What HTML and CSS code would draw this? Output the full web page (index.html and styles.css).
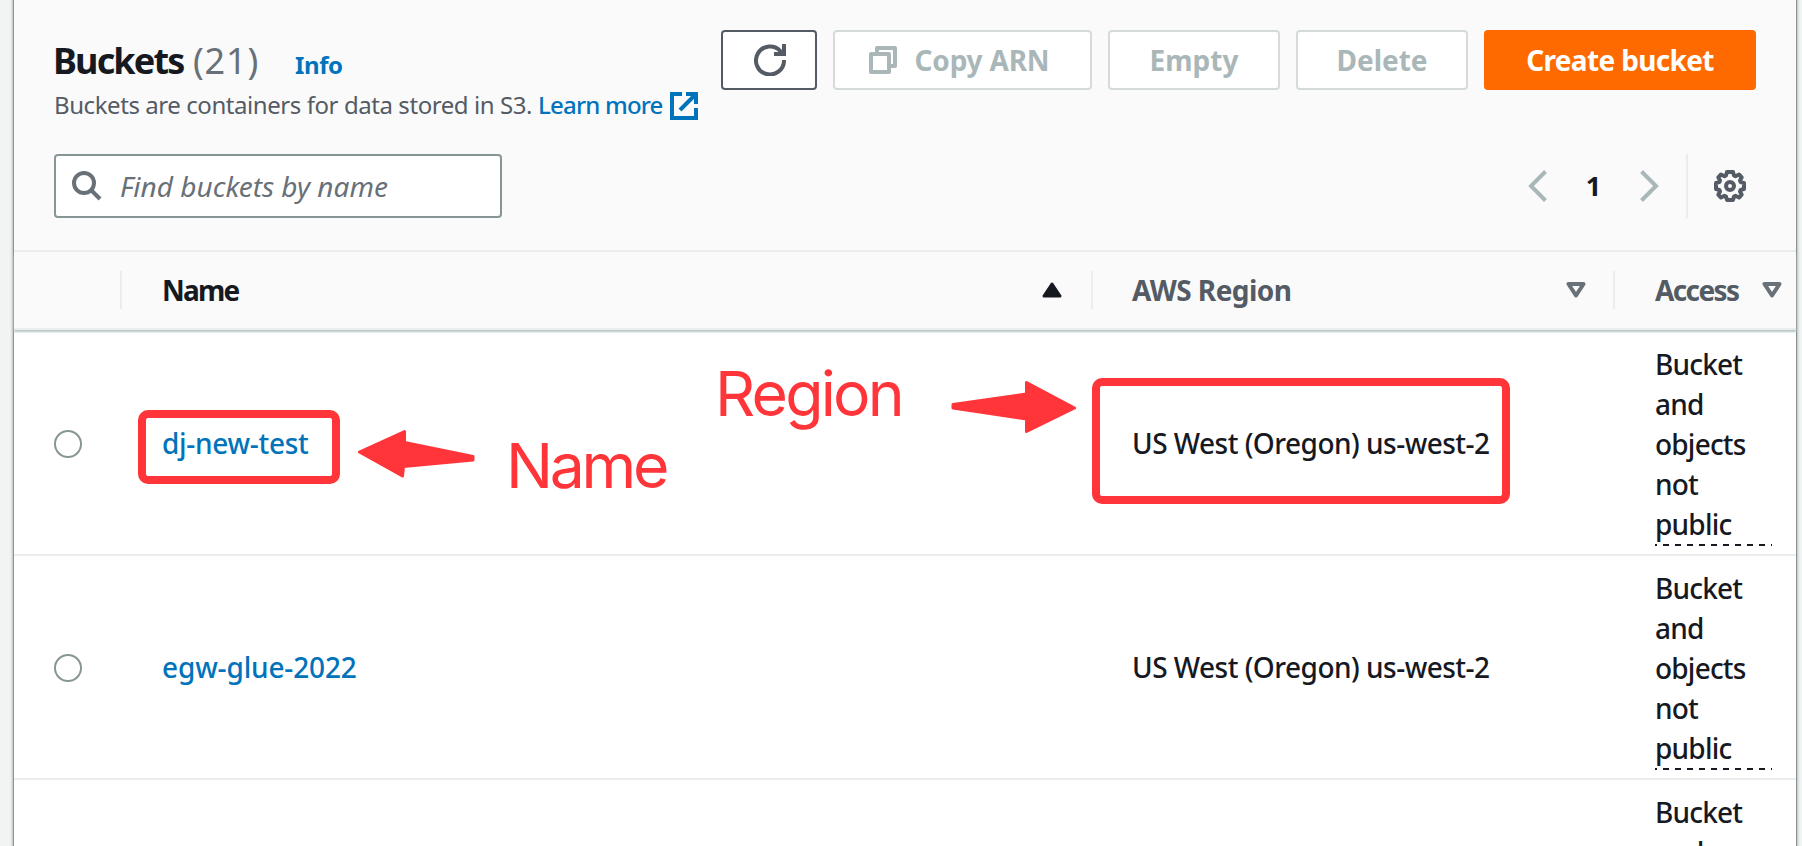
FILE: index.html
```
<!DOCTYPE html>
<html lang="en">
<head>
<meta charset="utf-8">
<title>Buckets</title>
<link rel="stylesheet" href="styles.css">
</head>
<body>
<main class="panel">
  <header class="header">
    <div class="title-row">
      <div class="titles">
        <h1 class="title"><span class="title-text">Buckets</span><span class="count">(21)</span><a class="info">Info</a></h1>
        <p class="desc"><span>Buckets are containers for data stored in S3.</span><a class="learn">Learn more</a>
          <svg class="ext" viewBox="0 0 28 28" fill="none" stroke="currentColor" stroke-width="4"><path d="M12 2H2v24h24V16M10 18 25 3"/><path d="M16 2h10v10" /><path d="M20 2h6v6z" stroke-width="1" fill="currentColor"/></svg>
        </p>
      </div>
      <div class="actions">
        <button class="btn btn-refresh"><svg width="32" height="32" viewBox="0 0 32 32" fill="none" stroke="currentColor" stroke-width="4"><path d="M30 16A14 14 0 1 1 26.5 7.2L29 10"/><path d="M30 0v10H20"/></svg></button>
        <button class="btn btn-copy disabled"><svg width="28" height="28" viewBox="0 0 28 28" fill="none" stroke="currentColor" stroke-width="4" stroke-linejoin="round"><path d="M2 8h18v18H2zM8 6V2h18v18h-4"/></svg><span>Copy ARN</span></button>
        <button class="btn btn-mid disabled">Empty</button>
        <button class="btn btn-mid disabled">Delete</button>
        <button class="btn btn-primary">Create bucket</button>
      </div>
    </div>
    <div class="tools">
      <div class="search">
        <svg width="30" height="30" viewBox="0 0 30 30" fill="none" stroke="currentColor" stroke-width="4"><circle cx="12" cy="12" r="10"/><path d="m19 19 9 9"/></svg>
        <span>Find buckets by name</span>
      </div>
      <div class="pager">
        <svg width="20" height="32" viewBox="0 0 20 32" fill="none" stroke="currentColor" stroke-width="4"><path d="M17.500 1.500 3 16l14.500 14.500"/></svg>
        <span class="page">1</span>
        <svg width="20" height="32" viewBox="0 0 20 32" fill="none" stroke="currentColor" stroke-width="4"><path d="M2.500 1.500 17 16 2.500 30.500"/></svg>
        <div class="settings">
          <svg width="32" height="32" viewBox="0 0 32 32" fill="none" stroke="currentColor" stroke-width="4" stroke-linejoin="round"><path d="M13 2h6l1 3.500 1.500.700L25 4.500 27.700 7.300 26 10.500l.600 1.600L30 13v6l-3.400.900-.600 1.600 1.700 3.200L25 27.500l-3.500-1.700-1.500.700L19 30h-6l-1-3.500-1.500-.700L7 27.500l-2.700-2.800L6 21.500l-.600-1.600L2 19v-6l3.400-.900.600-1.600-1.700-3.200L7 4.500l3.500 1.700 1.500-.700z"/><circle cx="16" cy="16" r="4"/></svg>
        </div>
      </div>
    </div>
  </header>

  <section class="table">
    <div class="row head">
      <div></div>
      <div class="th sorted"><span class="t-name">Name</span><svg width="20" height="16" viewBox="0 0 20 16"><path d="M10 2 18 14H2z" fill="currentColor" stroke="currentColor" stroke-width="3" stroke-linejoin="round"/></svg></div>
      <div class="th region"><span class="t-region">AWS Region</span><svg class="down" width="20" height="16" viewBox="0 0 20 16"><path d="M2.500 2h15L10 13.500z" fill="none" stroke="currentColor" stroke-width="4" stroke-linejoin="round"/></svg></div>
      <div class="th last"><span class="t-access">Access</span><svg class="down" width="20" height="16" viewBox="0 0 20 16"><path d="M2.500 2h15L10 13.500z" fill="none" stroke="currentColor" stroke-width="4" stroke-linejoin="round"/></svg></div>
    </div>
    <div class="row">
      <div class="pick"><span class="radio"></span></div>
      <div class="td"><a class="link tight">dj-new-test</a></div>
      <div class="td">US West (Oregon) us-west-2</div>
      <div class="td access"><span>Bucket<br>and<br>objects<br>not<br>public</span></div>
    </div>
    <div class="row">
      <div class="pick"><span class="radio"></span></div>
      <div class="td"><a class="link">egw-glue-2022</a></div>
      <div class="td">US West (Oregon) us-west-2</div>
      <div class="td access"><span>Bucket<br>and<br>objects<br>not<br>public</span></div>
    </div>
    <div class="row">
      <div></div>
      <div class="td"></div>
      <div class="td"></div>
      <div class="td access"><span>Bucket<br>and</span></div>
    </div>
  </section>
</main>

<div class="mark mark-name"></div>
<div class="mark mark-region"></div>
<svg class="arrows" width="1802" height="846" viewBox="0 0 1802 846"><path d="M359.500 452 404.500 431.500V442.500L473 456.500V460L403.500 466.500 402.500 476zM953 404.500V408L1026.500 419V431.500L1074.500 408 1026.500 382.500V394z"/></svg>
<div class="note note-name">Name</div>
<div class="note note-region">Region</div>
</body>
</html>
```
FILE: styles.css
```
* { box-sizing: border-box; }
body {
  margin: 0;
  width: 1802px;
  height: 846px;
  overflow: hidden;
  position: relative;
  background: #f2f3f3;
  font: 500 28px/40px "Noto Sans", "Open Sans", sans-serif;
  color: #16191f;
}
svg { display: block; flex: none; }

.panel {
  width: 1782px;
  height: 846px;
  margin-left: 14px;
  background: #fff;
  box-shadow: 0 0 0 1px #879596, 0 0 2px 2px #b4bfc0;
}

.header {
  height: 252px;
  padding: 30px 40px 0 41px;
  background: #fafafa;
  border-bottom: 2px solid #eaeded;
}
.title-row { display: flex; justify-content: space-between; height: 124px; }
.title {
  display: flex;
  align-items: baseline;
  margin: 0;
  height: 53px;
  padding-top: 6px;
  font-size: 36px;
  line-height: 50px;
  font-weight: 700;
}
.title-text { width: 140px; margin-left: -2px; letter-spacing: -1.85px; }
.count { width: 102px; font-weight: 400; letter-spacing: .8px; color: #687078; }
.info { font-size: 24px; letter-spacing: -.4px; color: #0073bb; }
.desc {
  display: flex;
  align-items: center;
  margin: 0;
  height: 44px;
  font-size: 24px;
  font-weight: 400;
  color: #545b64;
  white-space: nowrap;
}
.desc span { width: 484px; margin-left: -1px; letter-spacing: -.43px; }
.learn { width: 132px; font-weight: 500; letter-spacing: -.8px; color: #0073bb; }
.ext { width: 28px; height: 28px; margin-top: 2px; color: #0073bb; }

.actions { display: flex; gap: 16px; height: 60px; }
.btn {
  display: flex;
  align-items: center;
  justify-content: center;
  height: 60px;
  padding: 0 0 1px;
  border: 2px solid #545b64;
  border-radius: 4px;
  background: #fff;
  color: #545b64;
  font: 700 28px/40px "Noto Sans", sans-serif;
  white-space: nowrap;
}
.disabled { border-color: #d5dbdb; color: #aab7b8; }
.btn-refresh { width: 96px; padding: 0 0 0 2px; }
.btn-copy { width: 259px; gap: 18px; padding-right: 7px; letter-spacing: -.2px; }
.btn-copy svg { margin-top: 1px; }
.btn-mid { width: 172px; }
.btn-primary { width: 272px; border-color: #ff6a00; background: #ff6a00; color: #fff; letter-spacing: -.65px; }

.tools { display: flex; justify-content: space-between; }
.search {
  display: flex;
  align-items: center;
  gap: 18px;
  width: 448px;
  height: 64px;
  padding-left: 16px;
  margin-left: -1px;
  border: 2px solid #879596;
  border-radius: 4px;
  background: #fff;
  color: #687078;
  font-style: italic;
  font-weight: 400;
}
.pager { display: flex; align-items: center; color: #aab7b8; }
.page { width: 91px; padding: 0 0 1px; text-align: center; font-size: 27px; font-weight: 700; color: #16191f; }
.settings {
  display: flex;
  align-items: center;
  width: 70px;
  height: 64px;
  margin-left: 27px;
  padding-left: 26px;
  border-left: 2px solid #eaeded;
  color: #545b64;
}

.row {
  display: grid;
  grid-template-columns: 108px 970px 523px 181px;
  height: 224px;
  align-items: center;
  border-bottom: 2px solid #eaeded;
}
.head {
  position: relative;
  height: 78px;
  background: #fafafa;
  box-shadow: 0 2px 2px #b9c4c4;
}
.head + .row { height: 226px; padding-top: 2px; }
.th {
  display: flex;
  align-items: center;
  justify-content: space-between;
  height: 38px;
  margin-left: -2px;
  padding: 0 29px 1px 40px;
  border-left: 2px solid #eaeded;
  font-weight: 700;
  color: #545b64;
}
.th svg { margin-top: 1px; }
.sorted { color: #16191f; }
.sorted svg { margin-right: 1px; }
.region { margin-left: -1px; padding-left: 39px; }
.last { padding-right: 14px; }
.down { color: #687078; }
.t-name { letter-spacing: -1.8px; }
.t-region { letter-spacing: -.55px; }
.t-access { letter-spacing: -1.6px; }
.pick { padding: 2px 0 0 40px; }
.radio {
  display: block;
  width: 28px;
  height: 28px;
  border: 2px solid #879596;
  border-radius: 50%;
}
.td { padding: 0 0 0 40px; letter-spacing: -.52px; white-space: nowrap; }
.link { color: #0073bb; letter-spacing: -.15px; }
.tight { letter-spacing: -.3px; }
.access { align-self: start; padding: 12px 24px 0 40px; letter-spacing: -.8px; }
.access span {
  display: block;
  height: 202px;
  background: repeating-linear-gradient(90deg, #16191f 0 4px, transparent 4px 8px, #16191f 8px 12px) -4px 100% / 100% 2px no-repeat;
  background: linear-gradient(90deg, #16191f 50%, transparent 50%) -4px 100% / 12px 2px repeat-x;
}

.mark { position: absolute; border: 8px solid #ff353a; border-radius: 10px; }
.mark-name { left: 138px; top: 410px; width: 202px; height: 74px; }
.mark-region { left: 1092px; top: 378px; width: 418px; height: 126px; }
.arrows {
  position: absolute;
  left: 0;
  top: 0;
  fill: #ff353a;
  stroke: #ff353a;
  stroke-width: 3;
  stroke-linejoin: round;
}
.note {
  position: absolute;
  font: 400 62.500px/76px Inter, sans-serif;
  color: #ff353a;
}
.note-name { left: 506px; top: 427px; letter-spacing: -3.300px; }
.note-region { left: 715px; top: 355px; letter-spacing: -2.800px; }
```
